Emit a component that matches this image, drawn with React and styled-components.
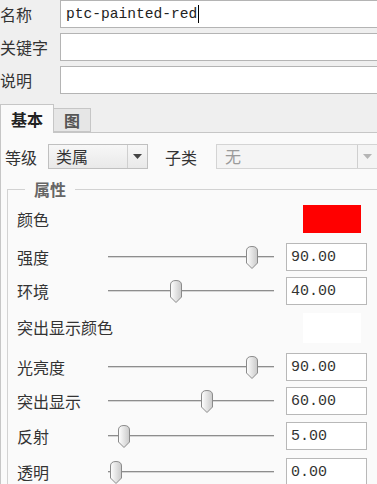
import React from "react";
import styled, { createGlobalStyle } from "styled-components";

const GlobalStyle = createGlobalStyle`
  html, body {
    margin: 0;
    padding: 0;
    background: #efefef;
  }
  * {
    box-sizing: border-box;
  }
`;

// row heights follow the spacing of the original dialog
const props = [
  { label: "颜色", color: "#ff0000", h: 38 },
  { label: "强度", value: 90, h: 34 },
  { label: "环境", value: 40, h: 36 },
  { label: "突出显示颜色", color: "#ffffff", h: 40 },
  { label: "光亮度", value: 90, h: 34 },
  { label: "突出显示", value: 60, h: 35 },
  { label: "反射", value: 5, h: 36 },
  { label: "透明", value: 0, h: 28 },
];

function Thumb() {
  return (
    <svg width="12" height="23" viewBox="0 0 12 23">
      <defs>
        <linearGradient id="tg" x1="0" y1="0" x2="1" y2="0">
          <stop offset="0" stopColor="#ffffff" />
          <stop offset="1" stopColor="#c9c9c9" />
        </linearGradient>
      </defs>
      <path
        d="M0.5 5 Q0.5 0.5 6 0.5 Q11.5 0.5 11.5 5 L11.5 17 L6 22.5 L0.5 17 Z"
        fill="url(#tg)"
        stroke="#8a8a8a"
      />
    </svg>
  );
}

function Slider({ value }) {
  return (
    <Track>
      <ThumbWrap style={{ left: 2 + (value / 100) * 151 }}>
        <Thumb />
      </ThumbWrap>
    </Track>
  );
}

function Select({ text, disabled }) {
  return (
    <SelectBox $disabled={disabled}>
      <SelectText $disabled={disabled}>{text}</SelectText>
      <ArrowCell>
        <svg width="9" height="5" viewBox="0 0 9 5">
          <path d="M0 0 L9 0 L4.5 5 Z" fill={disabled ? "#b5b5b5" : "#444"} />
        </svg>
      </ArrowCell>
    </SelectBox>
  );
}

export default function App() {
  return (
    <Root>
      <GlobalStyle />
      <Fields>
        <Label>名称</Label>
        <TextInput>
          ptc-painted-red<Caret />
        </TextInput>
        <Label>关键字</Label>
        <TextInput />
        <Label>说明</Label>
        <TextInput />
      </Fields>

      <Tabs>
        <Tab $active>基本</Tab>
        <Tab>图</Tab>
      </Tabs>

      <Pane>
        <ClassRow>
          <ClassLabel>等级</ClassLabel>
          <Select text="类属" />
          <SubLabel>子类</SubLabel>
          <Select text="无" disabled />
        </ClassRow>

        <Group>
          <Legend>属性</Legend>
          <PropGrid $rows={props.map((p) => p.h + "px").join(" ")}>
            {props.map((p) =>
              p.color ? (
                <React.Fragment key={p.label}>
                  <PropLabel $wide>{p.label}</PropLabel>
                  <Swatch $color={p.color} $tall={p.h === 40} />
                </React.Fragment>
              ) : (
                <React.Fragment key={p.label}>
                  <PropLabel>{p.label}</PropLabel>
                  <Slider value={p.value} />
                  <ValueBox>{p.value.toFixed(2)}</ValueBox>
                </React.Fragment>
              )
            )}
          </PropGrid>
        </Group>
      </Pane>
    </Root>
  );
}

const Root = styled.div`
  width: 377px;
  height: 484px;
  overflow: hidden;
  background: #efefef;
  font-family: "Noto Sans CJK SC", "Noto Sans", sans-serif;
  color: #333;
`;

const Fields = styled.div`
  display: grid;
  grid-template-columns: 60px 1fr;
  row-gap: 5px;
  width: 400px;
  align-items: center;
`;

const Label = styled.div`
  font-size: 16px;
  line-height: 20px;
  color: #333;
  white-space: nowrap;
  flex-shrink: 0;
`;

const TextInput = styled.div`
  height: 28px;
  background: #fff;
  border: 1px solid #b4b4b4;
  border-right: none;
  padding-left: 5px;
  display: flex;
  align-items: center;
  font-family: "Liberation Mono", monospace;
  font-size: 14.6px;
  color: #222;
`;

const Caret = styled.span`
  display: inline-block;
  width: 1px;
  height: 18px;
  background: #000;
  margin-left: 1px;
`;

const Tabs = styled.div`
  display: flex;
  align-items: flex-end;
  margin-top: 10px;
  height: 28px;
  position: relative;
  z-index: 1;
`;

const Tab = styled.div`
  height: ${(p) => (p.$active ? "29px" : "24px")};
  padding: 0 10px;
  background: ${(p) => (p.$active ? "#fafafa" : "#e6e6e6")};
  border: 1px solid #c6c6c6;
  border-bottom: ${(p) => (p.$active ? "none" : "1px solid #c6c6c6")};
  border-left: ${(p) => (p.$active ? "1px solid #c6c6c6" : "none")};
  font-size: 16px;
  font-weight: bold;
  color: ${(p) => (p.$active ? "#222" : "#555")};
  display: flex;
  align-items: center;
  margin-bottom: ${(p) => (p.$active ? "-1px" : "0")};
`;

const Pane = styled.div`
  background: #fafafa;
  border-top: 1px solid #c6c6c6;
  border-left: 1px solid #c6c6c6;
  height: 360px;
  padding-top: 11px;
`;

const ClassRow = styled.div`
  display: flex;
  align-items: center;
  padding-left: 4px;
  height: 25px;
  width: 420px;
`;

const ClassLabel = styled(Label)`
  width: 43px;
`;

const SubLabel = styled(Label)`
  margin-left: 17px;
  width: 51px;
`;

const SelectBox = styled.div`
  display: flex;
  height: 25px;
  width: ${(p) => (p.$disabled ? "162px" : "100px")};
  flex-shrink: 0;
  border: 1px solid ${(p) => (p.$disabled ? "#d4d4d4" : "#c0c0c0")};
  background: ${(p) =>
    p.$disabled ? "#f4f4f4" : "linear-gradient(#f7f7f7, #e9e9e9)"};
`;

const SelectText = styled.div`
  flex: 1;
  padding-left: ${(p) => (p.$disabled ? "8px" : "7px")};
  font-size: 16px;
  line-height: 23px;
  color: ${(p) => (p.$disabled ? "#9a9a9a" : "#333")};
`;

const ArrowCell = styled.div`
  width: 20px;
  border-left: 1px solid #cfcfcf;
  display: flex;
  align-items: center;
  justify-content: center;
`;

const Group = styled.fieldset`
  margin: 10px -20px 0 6px;
  padding: 0 0 0 9px;
  border: 1px solid #d2d2d2;
  border-right: none;
  min-width: 0;
`;

const Legend = styled.legend`
  margin-left: 8px;
  padding: 0 9px;
  font-size: 16px;
  font-weight: bold;
  color: #666;
  line-height: 20px;
`;

const PropGrid = styled.div`
  display: grid;
  grid-template-columns: 91px 178px 81px;
  grid-template-rows: ${(p) => p.$rows};
  align-items: start;
  padding-top: 6px;
`;

const PropLabel = styled.div`
  grid-column: ${(p) => (p.$wide ? "1 / 3" : "auto")};
  font-size: 16px;
  line-height: 28px;
  height: 28px;
  color: #333;
  white-space: nowrap;
`;

const Track = styled.div`
  position: relative;
  width: 166px;
  height: 28px;

  &::before {
    content: "";
    position: absolute;
    left: 0;
    right: 0;
    top: 13px;
    height: 1px;
    background: #8d8d8d;
    box-shadow: 0 1px 0 #d6d6d6;
  }
`;

const ThumbWrap = styled.div`
  position: absolute;
  top: 3px;
  width: 12px;
  height: 23px;
  display: flex;
`;

const ValueBox = styled.div`
  height: 28px;
  background: #fff;
  border: 1px solid #b8b8b8;
  padding-left: 4px;
  display: flex;
  align-items: center;
  font-family: "Liberation Mono", monospace;
  font-size: 15px;
  color: #333;
`;

const Swatch = styled.div`
  justify-self: start;
  margin-left: 17px;
  width: 58px;
  height: ${(p) => (p.$tall ? "30px" : "28px")};
  background: ${(p) => p.$color};
`;
